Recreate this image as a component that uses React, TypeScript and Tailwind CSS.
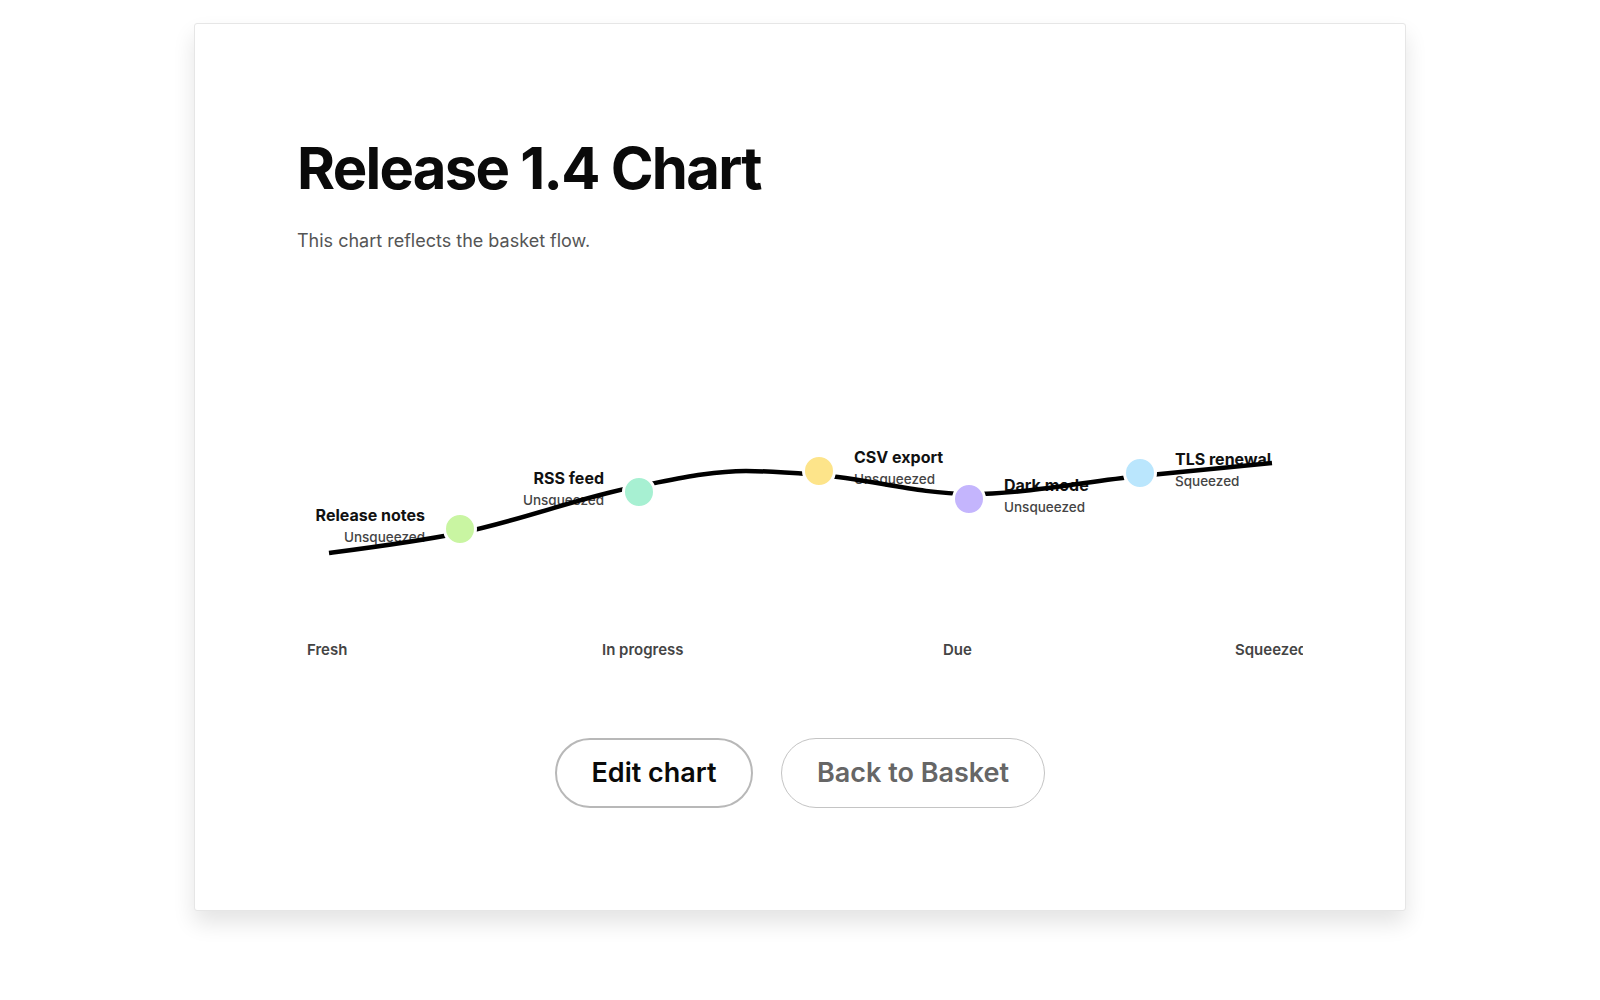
import React from "react";

type Item = {
  name: string;
  status: string;
  x: number;
  y: number;
  color: string;
  side: "left" | "right";
};

const ITEMS: Item[] = [
  { name: "Release notes", status: "Unsqueezed", x: 460, y: 529, color: "#c9f5a2", side: "left" },
  { name: "RSS feed", status: "Unsqueezed", x: 639, y: 492, color: "#a7f0d2", side: "left" },
  { name: "CSV export", status: "Unsqueezed", x: 819, y: 471, color: "#fde48a", side: "right" },
  { name: "Dark mode", status: "Unsqueezed", x: 969, y: 499, color: "#c4b5fd", side: "right" },
  { name: "TLS renewal", status: "Squeezed", x: 1140, y: 473, color: "#bae6fd", side: "right" },
];

// points the flow line runs through (page coordinates, same as the viewBox)
const LINE: [number, number][] = [
  [329, 553],
  [460, 533],
  [639, 486],
  [746, 471],
  [819, 475],
  [969, 494],
  [1140, 476],
  [1272, 463],
];

const sign = (v: number) => (v < 0 ? -1 : 1);

// monotone-x cubic through the points (no overshoot at peaks/dips)
function monotonePath(pts: [number, number][]) {
  const n = pts.length;
  const h: number[] = [];
  const s: number[] = [];
  for (let i = 0; i < n - 1; i++) {
    h.push(pts[i + 1][0] - pts[i][0]);
    s.push((pts[i + 1][1] - pts[i][1]) / h[i]);
  }
  const m: number[] = new Array(n).fill(0);
  for (let i = 1; i < n - 1; i++) {
    const s0 = s[i - 1];
    const s1 = s[i];
    if (s0 * s1 <= 0) {
      m[i] = 0;
    } else {
      const p = (s0 * h[i] + s1 * h[i - 1]) / (h[i - 1] + h[i]);
      m[i] = (sign(s0) + sign(s1)) * Math.min(Math.abs(s0), Math.abs(s1), 0.5 * Math.abs(p));
    }
  }
  m[0] = (3 * s[0] - m[1]) / 2;
  m[n - 1] = (3 * s[n - 2] - m[n - 2]) / 2;

  let d = `M ${pts[0][0]} ${pts[0][1]}`;
  for (let i = 0; i < n - 1; i++) {
    const [x0, y0] = pts[i];
    const [x1, y1] = pts[i + 1];
    const dx = h[i] / 3;
    d += ` C ${(x0 + dx).toFixed(1)} ${(y0 + m[i] * dx).toFixed(1)}, ${(x1 - dx).toFixed(1)} ${(y1 - m[i + 1] * dx).toFixed(1)}, ${x1} ${y1}`;
  }
  return d;
}

const FlowChart: React.FC = () => {
  return (
    <svg
      width={1006}
      height={330}
      viewBox="297 290 1006 330"
      className="mt-[35px] block"
      style={{ fontFamily: "Inter, 'Liberation Sans', sans-serif" }}
    >
      {ITEMS.map((it) => {
        const tx = it.side === "left" ? it.x - 35 : it.x + 35;
        const anchor = it.side === "left" ? "end" : "start";
        return (
          <g key={it.name}>
            <text x={tx} y={it.y - 8} textAnchor={anchor} fontSize={16} fontWeight={700} fill="#111">
              {it.name}
            </text>
            <text x={tx} y={it.y + 12.5} textAnchor={anchor} fontSize={13.5} fontWeight={500} fill="#444">
              {it.status}
            </text>
          </g>
        );
      })}
      <path d={monotonePath(LINE)} fill="none" stroke="#000" strokeWidth={4.5} />
      {ITEMS.map((it) => (
        <circle key={it.name} cx={it.x} cy={it.y} r={15.5} fill={it.color} stroke="#fff" strokeWidth={3} />
      ))}
    </svg>
  );
};

export default function App() {
  return (
    <div className="min-h-screen bg-white pt-[23px] font-['Inter','Liberation_Sans',sans-serif]">
      <div className="mx-auto w-[1212px] rounded-[3px] border border-[#e6e6e6] bg-white px-[102px] pt-[109px] pb-[102px] shadow-[0_12px_22px_rgba(0,0,0,0.11)]">
        <h1 className="text-[58px] leading-[70px] font-bold tracking-[-0.03em] text-[#0a0a0a]">Release 1.4 Chart</h1>
        <p className="mt-[24px] text-[18px] leading-[28px] text-[#555]">This chart reflects the basket flow.</p>

        <FlowChart />

        <div className="mt-[20px] grid w-[1006px] grid-cols-[295px_341px_292px_1fr] overflow-hidden pl-[10px] text-[15px] leading-5 font-semibold text-[#444] whitespace-nowrap">
          <span>Fresh</span>
          <span>In progress</span>
          <span>Due</span>
          <span>Squeezed</span>
        </div>

        <div className="mt-[78px] flex justify-center gap-[28px]">
          <button className="flex h-[70px] w-[198px] items-center justify-center rounded-full border-2 border-[#b8b8b8] text-[27px] font-semibold text-[#0a0a0a]">
            Edit chart
          </button>
          <button className="flex h-[70px] w-[264px] items-center justify-center rounded-full border border-[#c4c4c4] text-[27px] font-semibold text-[#666]">
            Back to Basket
          </button>
        </div>
      </div>
    </div>
  );
}
